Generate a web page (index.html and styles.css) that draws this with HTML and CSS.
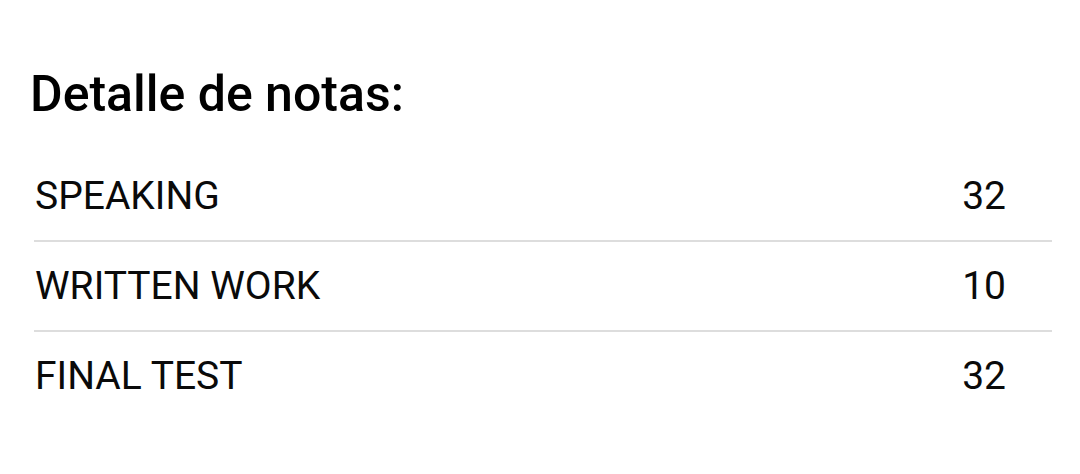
FILE: index.html
```html
<!DOCTYPE html>
<html lang="es">
<head>
    <meta charset="UTF-8">
    <meta name="viewport" content="width=device-width, initial-scale=1.0">
    <title>Detalle de notas</title>
    <link rel="stylesheet" href="styles.css">
</head>
<body>
    <div class="grades-container">
        <h2>Detalle de notas:</h2>
        <ul class="grade-list">
            <li class="grade-row">
                <span class="grade-name">SPEAKING</span>
                <span class="grade-value">32</span>
            </li>
            <li class="grade-row">
                <span class="grade-name">WRITTEN WORK</span>
                <span class="grade-value">10</span>
            </li>
            <li class="grade-row">
                <span class="grade-name">FINAL TEST</span>
                <span class="grade-value">32</span>
            </li>
        </ul>
    </div>
</body>
</html>
```

FILE: styles.css
```css
body {
    font-family: Roboto, "Noto Sans", Arial, sans-serif;
    background-color: #ffffff;
    color: #0a0a0a;
    margin: 0;
}
.grades-container {
    padding: 65px 28px 0 34px;
}
h2 {
    font-size: 50px;
    font-weight: 500;
    color: #000;
    margin: 0 0 0 -4px;
    line-height: 58px;
}
.grade-list {
    list-style: none;
    margin: 29px 0 0 0;
    padding: 0;
}
.grade-row {
    display: flex;
    justify-content: space-between;
    align-items: center;
    height: 88px;
    padding: 0 46px 0 1px;
    font-size: 39px;
    border-bottom: 2px solid #dddddd;
}
.grade-row:last-child {
    border-bottom: none;
}
```
